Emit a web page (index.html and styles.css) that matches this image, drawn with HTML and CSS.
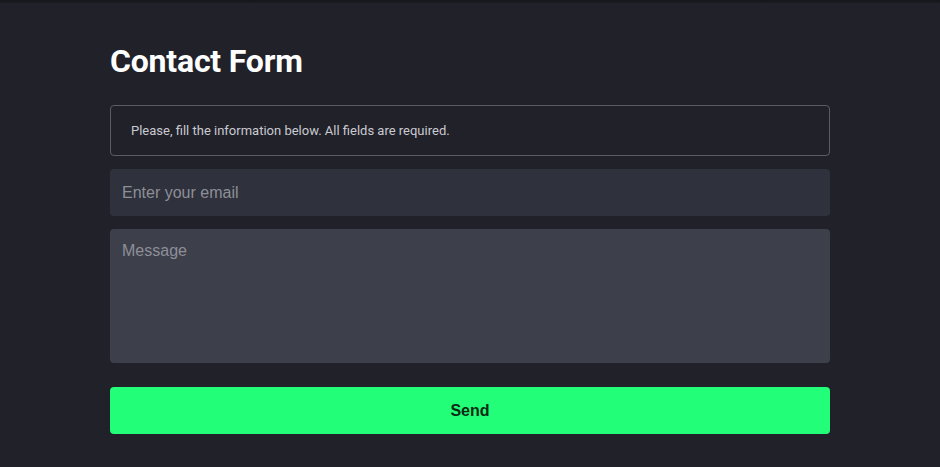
FILE: index.html
```html
<!DOCTYPE html>
<html>
<head>
<meta charset="utf-8">
<link rel="stylesheet" href="styles.css">
</head>
<body>
<div class="topbar"></div>
<main class="wrap">
  <h1 class="title">Contact Form</h1>
  <form class="form">
    <div class="notice">Please, fill the information below. All fields are required.</div>
    <input class="field email" type="text" placeholder="Enter your email">
    <textarea class="field message" placeholder="Message"></textarea>
    <button class="send" type="button">Send</button>
  </form>
</main>
</body>
</html>
```
FILE: styles.css
```css
html, body {
  margin: 0;
  padding: 0;
  background: #21212a;
  height: 100%;
}
body {
  font-family: Roboto, "Liberation Sans", sans-serif;
}
.topbar {
  height: 3px;
  background: linear-gradient(#15151b, #1c1c24);
}
.wrap {
  width: 720px;
  margin: 0 auto;
  padding-top: 38px;
}
.title {
  margin: 0;
  font-family: Roboto, sans-serif;
  font-weight: 700;
  font-size: 32px;
  line-height: 40px;
  color: #ffffff;
  letter-spacing: -0.2px;
}
.form {
  display: flex;
  flex-direction: column;
  margin-top: 24px;
}
.notice {
  box-sizing: border-box;
  height: 51px;
  border: 1px solid #5a5c66;
  border-radius: 4px;
  padding: 0 20px;
  display: flex;
  align-items: center;
  font-size: 13px;
  color: #c9cad0;
}
.field {
  box-sizing: border-box;
  border: none;
  outline: none;
  border-radius: 4px;
  font-family: "Liberation Sans", Arial, sans-serif;
  font-size: 16px;
  color: #e5e5ea;
  padding: 0 12px;
  margin: 0;
  resize: none;
}
.field::placeholder {
  color: #8d8f98;
}
.email {
  height: 47px;
  margin-top: 13px;
  background: #2f313c;
}
.message {
  height: 134px;
  margin-top: 13px;
  padding-top: 13px;
  background: #3d3f4b;
  display: block;
}
.send {
  margin-top: 24px;
  height: 47px;
  border: none;
  border-radius: 4px;
  background: #22fe78;
  color: #0b2a14;
  font-family: "Liberation Sans", Arial, sans-serif;
  font-weight: 700;
  font-size: 16px;
  cursor: pointer;
}
```
